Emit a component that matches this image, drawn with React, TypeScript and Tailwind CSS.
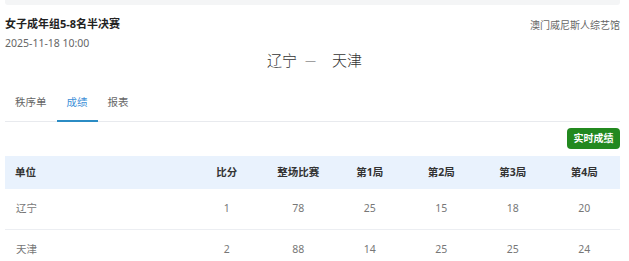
import React from 'react';

const font = { fontFamily: '"Noto Sans", "Noto Sans CJK SC", sans-serif' };

type Row = { team: string; score: number; total: number; sets: number[] };

const rows: Row[] = [
  { team: '辽宁', score: 1, total: 78, sets: [25, 15, 18, 20] },
  { team: '天津', score: 2, total: 88, sets: [14, 25, 25, 24] },
];

const headers = ['比分', '整场比赛', '第1局', '第2局', '第3局', '第4局'];

function Tabs() {
  const tabs = ['秩序单', '成绩', '报表'];
  return (
    <div className="flex h-[40px] border-b border-[#e8eaee]">
      {tabs.map(tab => {
        const active = tab === '成绩';
        return (
          <div
            key={tab}
            className={`relative flex items-center px-[10px] pt-[3px] text-[10.5px] ${active ? 'text-[#3d8fd8]' : 'text-[#666]'}`}
          >
            {tab}
            {active ? <div className="absolute bottom-[-1px] left-0 right-0 h-[2px] bg-[#2b8cc4]" /> : null}
          </div>
        );
      })}
    </div>
  );
}

export default function App() {
  return (
    <div className="h-[261px] w-[629px] overflow-hidden bg-white" style={font}>
      <div className="ml-[5px] h-[5px] w-[615px] rounded-b-[3px] bg-[#f4f5f6]" />
      <div className="ml-[5px] w-[615px]">
        <div className="flex items-start justify-between pt-[11px]">
          <div>
            <div className="text-[11px] font-bold leading-[16px] text-[#222]">女子成年组5-8名半决赛</div>
            <div className="mt-[3px] text-[10.5px] leading-[16px] text-[#666]">2025-11-18 10:00</div>
          </div>
          <div className="pt-[1px] text-[10px] leading-[16px] text-[#666]">澳门威尼斯人综艺馆</div>
        </div>
        <div className="-mt-[1px] flex h-[20px] items-center justify-center pl-[4px] text-[15px] font-light text-[#333]">
          <span>辽宁</span>
          <span className="ml-[8px] mr-[16px] text-[11px] text-[#555]">—</span>
          <span>天津</span>
        </div>
        <div className="mt-[12px]">
          <Tabs />
        </div>
        <div className="flex justify-end pt-[6px]">
          <button
            type="button"
            className="h-[21px] w-[53px] rounded-[4px] bg-[#22891f] text-[10px] font-bold text-white"
          >
            实时成绩
          </button>
        </div>
        <div className="mt-[7px]">
          <div className="grid h-[33px] grid-cols-[186px_repeat(6,1fr)] items-center bg-[#e9f2fd] text-[10.5px] font-bold text-[#333]">
            <div className="pl-[10px]">单位</div>
            {headers.map(h => (
              <div key={h} className="text-center">{h}</div>
            ))}
          </div>
          {rows.map(row => (
            <div
              key={row.team}
              className="grid h-[41px] grid-cols-[186px_repeat(6,1fr)] items-center border-b border-[#eceef2] text-[10.5px] text-[#777]"
            >
              <div className="pl-[11px]">{row.team}</div>
              <div className="text-center">{row.score}</div>
              <div className="text-center">{row.total}</div>
              {row.sets.map((s, i) => (
                <div key={i} className="text-center">{s}</div>
              ))}
            </div>
          ))}
        </div>
      </div>
    </div>
  );
}
